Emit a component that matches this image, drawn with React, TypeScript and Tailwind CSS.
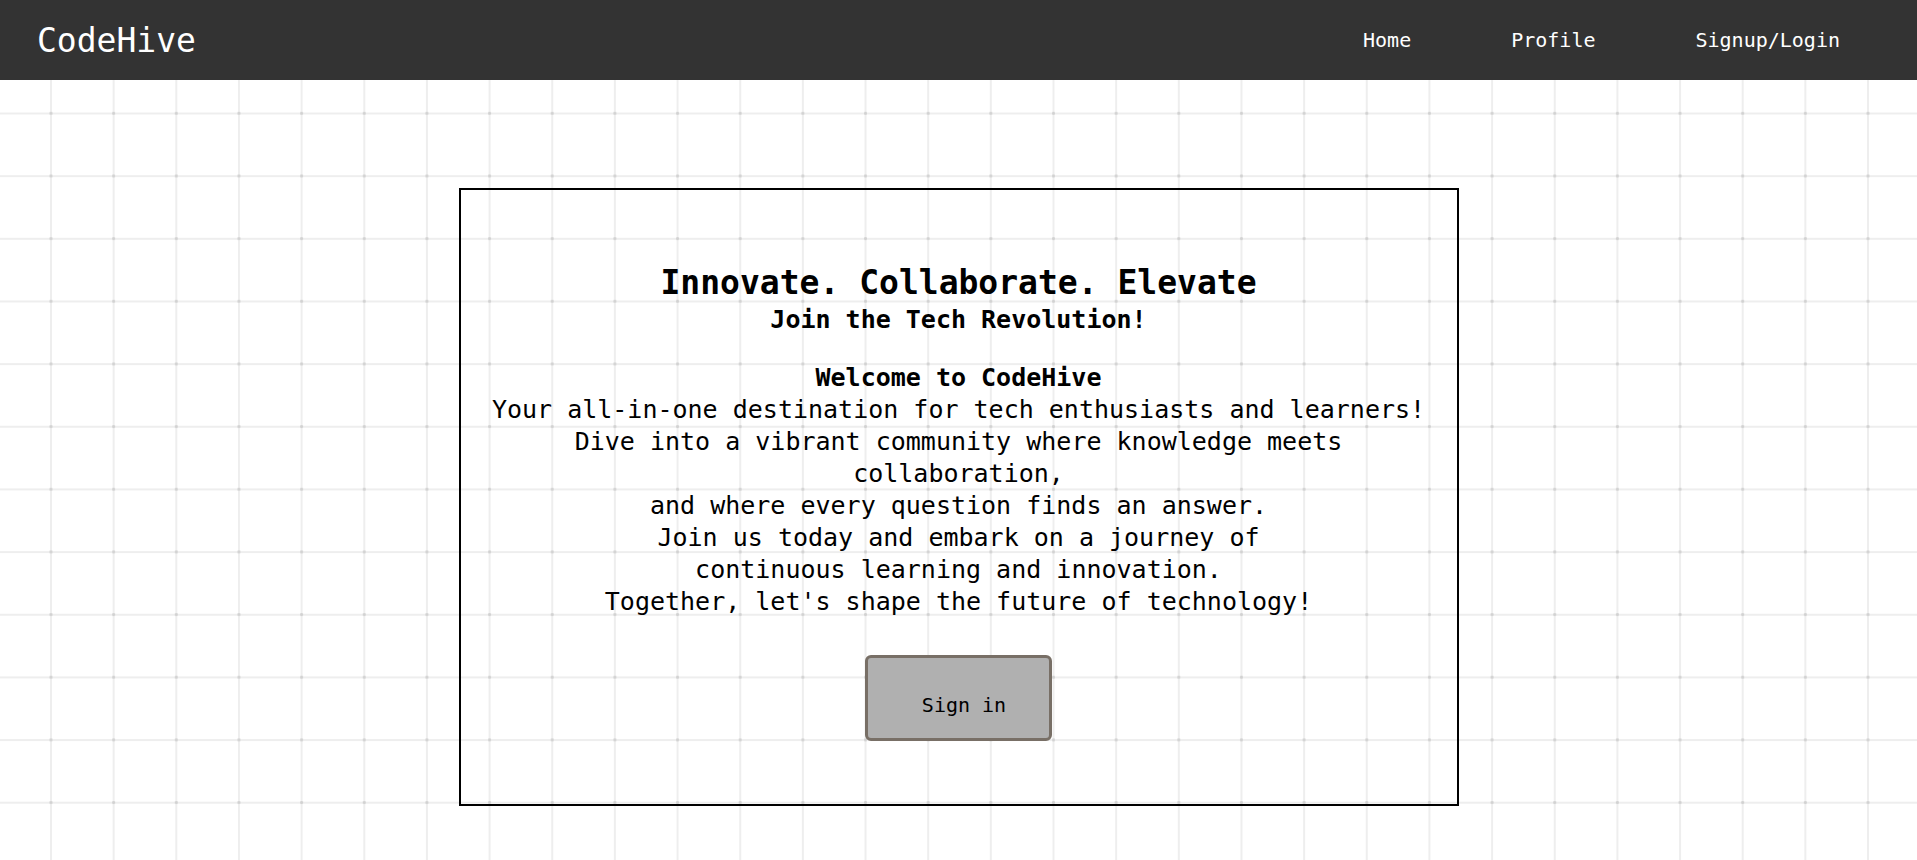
import * as React from "react";

const links = ["Home", "Profile", "Signup/Login"];

const bodyLines = [
  "Your all-in-one destination for tech enthusiasts and learners!",
  "Dive into a vibrant community where knowledge meets collaboration,",
  "and where every question finds an answer.",
  "Join us today and embark on a journey of",
  "continuous learning and innovation.",
  "Together, let's shape the future of technology!",
];

function Navbar() {
  return (
    <header className="flex h-[80px] shrink-0 items-center justify-between bg-[#333333] pl-[37px] pr-[77px] text-white">
      <a href="#" className="text-[33px] leading-none">
        CodeHive
      </a>
      <nav className="flex items-center gap-[100px] text-[20px]">
        {links.map((l) => (
          <a key={l} href="#" className="hover:underline">
            {l}
          </a>
        ))}
      </nav>
    </header>
  );
}

function Hero() {
  return (
    <section className="mx-auto mt-[108px] flex w-[1000px] flex-col items-center border-2 border-black px-6 pt-[72px] pb-[63px] text-center text-black">
      <h1 className="text-[33px] font-bold leading-[42px]">
        Innovate. Collaborate. Elevate
      </h1>
      <h2 className="text-[25px] font-bold leading-[32px]">
        Join the Tech Revolution!
      </h2>
      <div className="mt-[26px] text-[25px] leading-[32px]">
        <p className="font-bold">Welcome to CodeHive</p>
        <p>
          {bodyLines.map((line, i) => (
            <React.Fragment key={i}>
              {line}
              {i < bodyLines.length - 1 && <br />}
            </React.Fragment>
          ))}
        </p>
      </div>
      <button className="mt-[37px] flex h-[86px] w-[187px] items-center justify-center rounded-[6px] border-[3px] border-[#786f66] bg-[#b0b0b0] pl-[11px] pt-[14px] text-[20px] text-black">
        Sign in
      </button>
    </section>
  );
}

export default function App() {
  return (
    <div className="flex h-screen flex-col font-['DejaVu_Sans_Mono',monospace]">
      <Navbar />
      <main className="flex-1 overflow-y-auto bg-white bg-[image:radial-gradient(circle,#d2d2d2_1.2px,transparent_1.8px),linear-gradient(to_right,#eeeeee_1.5px,transparent_1.5px),linear-gradient(to_bottom,#eeeeee_1.5px,transparent_1.5px)] bg-[size:62.67px_62.67px] bg-[position:19.67px_2px,50px_32.5px,50px_32.5px] [&::-webkit-scrollbar]:w-[5px] [&::-webkit-scrollbar-thumb]:bg-[#5f5f5f] [&::-webkit-scrollbar-track]:bg-transparent">
        <div className="min-h-[1622px]">
          <Hero />
        </div>
      </main>
    </div>
  );
}
